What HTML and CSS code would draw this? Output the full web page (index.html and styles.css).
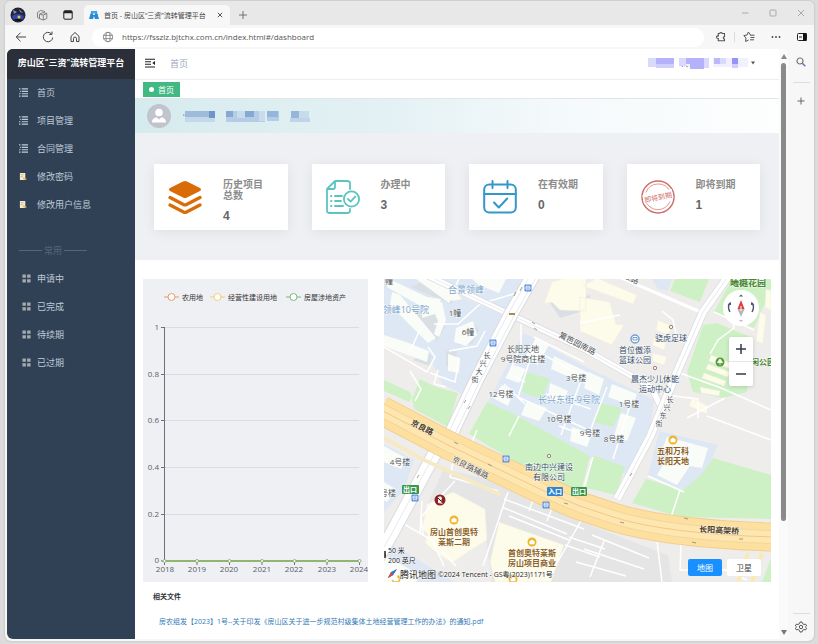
FILE: index.html
```
<!DOCTYPE html>
<html lang="zh-CN">
<head>
<meta charset="utf-8">
<meta name="viewport" content="width=device-width, initial-scale=1">
<title>首页 - 房山区“三资”流转管理平台</title>
<link rel="stylesheet" href="styles.css">
</head>
<body>
<svg class="defs" aria-hidden="true">
  <symbol id="i-list" viewBox="0 0 10 10"><path d="M0 1h1.6M3 1h7M1 3.7h1M3 3.7h7M0 6.4h1.6M3 6.4h7M0 9h1.6M3 9h7" stroke="currentColor" stroke-width="1.3" fill="none"/></symbol>
  <symbol id="i-note" viewBox="0 0 10 10"><path d="M1 1h6v8H1z" fill="#f3ead2"/><path d="M2 3h3M2 5h2" stroke="#c9a65c" stroke-width=".8"/><path d="M4 6l4 1 .5 1.5L5 8z" fill="#e0b050"/></symbol>
  <symbol id="i-grid" viewBox="0 0 10 10"><path d="M.5.5h3.8v3.8H.5zM5.7.5h3.8v3.8H5.7zM.5 5.7h3.8v3.8H.5zM5.7 5.7h3.8v3.8H5.7z" fill="#a5aaae"/></symbol>
</svg>

<div class="window">
  <div class="titlebar">
    <svg class="profile" viewBox="0 0 16 16"><circle cx="8" cy="8" r="7.5" fill="#22243a"/><path d="M2 9q6-4 12 0l-1 3q-5 3-10 0z" fill="#3346a8"/><path d="M3 3l4 2-3 2zM9 2l4 4-3-1z" fill="#8b93a5"/><circle cx="9" cy="10" r="1.5" fill="#d8c85a"/><path d="M4 12h8l-2 2H6z" fill="#10121c"/></svg>
    <svg class="ico-12 workspaces" viewBox="0 0 12 12" fill="none" stroke="#777" stroke-width=".9"><path d="M1.5 3.5l3-2 4 .8v1M1.5 3.5v5l2 1.2M3.5 5.2l3.5-1.7 3.8 1v5L7.4 11l-3.9-1.3zM3.5 5.2L7.3 6l3.5-1.5M7.3 6v5"/></svg>
    <svg class="ico-10 tabs-menu" viewBox="0 0 10 10"><rect x=".8" y=".8" width="8.4" height="8.4" rx="1.2" fill="none" stroke="#222" stroke-width="1"/><path d="M.8 3.3V2A1.2 1.2 0 0 1 2 .8h6A1.2 1.2 0 0 1 9.2 2v1.3z" fill="#222"/></svg>
    <div class="tab">
      <svg class="ico-10" viewBox="0 0 10 10"><path d="M2 1h6l.6 5H1.400z" fill="#3f9fe0"/><path d="M0 9l1.500-5h7L10 9H6L5 6 4 9z" fill="#238bd6"/><path d="M5 2l1 3H4z" fill="#eaf6fd"/></svg>
      <span class="tab-title">首页 - 房山区“三资”流转管理平台</span>
      <button class="bare" aria-label="关闭标签页"><svg class="ico-6" viewBox="0 0 6 6"><path d="M.8.8l4.4 4.4M5.2.8L.8 5.2" stroke="#444" stroke-width=".9"/></svg></button>
    </div>
    <button class="bare new-tab" aria-label="新建标签页"><svg class="ico-8" viewBox="0 0 8 8"><path d="M4 0v8M0 4h8" stroke="#666" stroke-width=".9"/></svg></button>
    <div class="window-buttons">
      <button class="bare" aria-label="最小化"><svg class="ico-8" viewBox="0 0 8 8"><path d="M1 4h6.500" stroke="#aaa"/></svg></button>
      <button class="bare" aria-label="最大化"><svg class="ico-8" viewBox="0 0 8 8"><rect x="1" y="1" width="6" height="6" rx="1" fill="none" stroke="#aaa"/></svg></button>
      <button class="bare" aria-label="关闭"><svg class="ico-8" viewBox="0 0 8 8"><path d="M1 1l6 6M7 1L1 7" stroke="#aaa"/></svg></button>
    </div>
  </div>

  <div class="toolbar">
    <div class="nav-buttons">
      <button class="bare" aria-label="后退"><svg class="ico-12" viewBox="0 0 12 12" fill="none" stroke="#444" stroke-width="1"><path d="M11 6H1.500M5.500 1.700L1.200 6l4.300 4.300"/></svg></button>
      <button class="bare" aria-label="刷新"><svg class="ico-12" viewBox="0 0 12 12" fill="none" stroke="#444" stroke-width="1"><path d="M10.700 6.500A4.700 4.700 0 1 1 9.300 2.700M10 .6v2.800H7.200"/></svg></button>
      <button class="bare" aria-label="主页"><svg class="ico-12" viewBox="0 0 12 12" fill="none" stroke="#444" stroke-width="1"><path d="M2 5.300L6 1.500l4 3.800v5.200H7.500V7.600a1.500 1.500 0 0 0-3 0v2.900H2z"/></svg></button>
    </div>
    <label class="address">
      <svg class="ico-12" viewBox="0 0 12 12" fill="none" stroke="#777" stroke-width=".8"><circle cx="6" cy="6" r="4.700"/><ellipse cx="6" cy="6" rx="2.100" ry="4.700"/><path d="M1.600 4.400h8.800M1.600 7.600h8.800"/></svg>
      <input type="text" aria-label="地址" value="https://fsszlz.bjtchx.com.cn/index.html#/dashboard">
    </label>
    <div class="tool-buttons">
      <button class="bare" aria-label="扩展"><svg class="ico-10" viewBox="0 0 10 10" fill="none" stroke="#555" stroke-width="1.100"><path d="M8.500 3.300V1.500H6.200a1.300 1.300 0 0 0-2.500 0H2.300V4a1.200 1.200 0 0 0-1 2.200l1 .3v2.200h6.200V7a1.200 1.200 0 1 1 0-2.400z"/></svg></button>
      <span class="tool-divider"></span>
      <button class="bare" aria-label="收藏夹"><svg class="ico-12" viewBox="0 0 12 12" fill="none" stroke="#555" stroke-width="1"><path d="M7.500 4L5.400 1 4 4 .8 4.600 3 7l-.4 3.500 3-1.500M7 4.200h4.500M7.500 6.500h4M7 8.800h4"/></svg></button>
      <button class="bare" aria-label="更多"><svg class="ico-10" viewBox="0 0 10 10" fill="#444"><circle cx="1.500" cy="5" r=".9"/><circle cx="5" cy="5" r=".9"/><circle cx="8.500" cy="5" r=".9"/></svg></button>
      <button class="bare" aria-label="侧边栏"><svg class="ico-10" viewBox="0 0 10 10"><rect x=".5" y="1.500" width="9" height="7" rx="1" fill="none" stroke="#222"/><path d="M6 1h3.500v8H6z" fill="#111"/><path d="M2 5h3" stroke="#222"/></svg></button>
    </div>
  </div>

  <div class="viewport">
    <div class="page">
      <nav class="sidebar">
        <h1 class="brand">房山区“三资”流转管理平台</h1>
        <ul class="menu">
          <li><a href="#"><svg class="ico-9"><use href="#i-list"/></svg>首页</a></li>
          <li><a href="#"><svg class="ico-9"><use href="#i-list"/></svg>项目管理</a></li>
          <li><a href="#"><svg class="ico-9"><use href="#i-list"/></svg>合同管理</a></li>
          <li><a href="#"><svg class="ico-9"><use href="#i-note"/></svg>修改密码</a></li>
          <li><a href="#"><svg class="ico-9"><use href="#i-note"/></svg>修改用户信息</a></li>
        </ul>
        <div class="menu-divider"><span>常用</span></div>
        <ul class="menu quick">
          <li><a href="#"><svg class="ico-9"><use href="#i-grid"/></svg>申请中</a></li>
          <li><a href="#"><svg class="ico-9"><use href="#i-grid"/></svg>已完成</a></li>
          <li><a href="#"><svg class="ico-9"><use href="#i-grid"/></svg>待续期</a></li>
          <li><a href="#"><svg class="ico-9"><use href="#i-grid"/></svg>已过期</a></li>
        </ul>
      </nav>

      <main class="main">
        <header class="navbar">
          <button class="bare" aria-label="折叠菜单"><svg class="ico-10" viewBox="0 0 10 10"><path d="M0 1.200h10M0 3.800h6M0 6.300h6M0 9h10" stroke="#222" stroke-width="1.100"/><path d="M10 3v4L7.300 5z" fill="#222"/></svg></button>
          <span class="crumb">首页</span>
          <button class="bare account" aria-label="账户菜单">
            <svg class="account-name" viewBox="0 0 100 12"><path d="M0 1h100v9H0z" fill="#f0f0ff"/><path d="M0 1h8v9H0zM31 1h7v8h-7zM56 1h5v10h-5zM66 1h12v6H66z" fill="#d9d9fd"/><path d="M8 1h18v6H8zM38 1h18v6H38zM42 7h14v5H42z" fill="#b4b2fa"/><path d="M8 7h18v4H8z" fill="#cfcefc"/><path d="M66 1h6v6h-6z" fill="#bdb8fb"/><path d="M84 1h6v6h-6z" fill="#9593f4"/><path d="M84 7h6v4h-6z" fill="#cfcefc"/><path d="M26 1h5v10h-5zM61 1h4v10h-4z" fill="#fff"/><path d="M34 10l1-1M38 9l2 1" stroke="#888" stroke-width=".8"/></svg>
            <svg class="caret" viewBox="0 0 6 4"><path d="M1 .5h4L3 3.500z" fill="#555"/></svg>
          </button>
        </header>

        <div class="tags"><a class="tag" href="#">首页</a></div>

        <section class="welcome">
          <svg class="avatar" viewBox="0 0 24 24"><circle cx="12" cy="12" r="12" fill="#c0c4cc"/><circle cx="12" cy="8.500" r="3.800" fill="#fff"/><path d="M5 18.500c0-3.500 2-4.500 4.500-5.300L12 15.500l2.500-2.300c2.500.8 4.500 1.800 4.500 5.300z" fill="#fff"/></svg>
          <svg class="welcome-name" viewBox="0 0 128 12"><path d="M2 2h30v10H2z" fill="#c3d8ea"/><path d="M2 1h24v6H2z" fill="#9fbbdc"/><path d="M26 1h6v7h-6z" fill="#7095c8"/><path d="M43 1h39v11H43z" fill="#b5cce5"/><path d="M43 1h7v6h-7zM62 1h9v6h-9z" fill="#88a8d4"/><path d="M54 1h8v7h-8zM76 1h6v10h-6z" fill="#c7dcec"/><path d="M84 1h12v10H84z" fill="#b4cce5"/><path d="M84 1h11v6H84zM108 1h8v7h-8z" fill="#96b5da"/><path d="M107 8h20v4h-20z" fill="#bed5e9"/><path d="M116 1h10v7h-10z" fill="#c5dcea"/><circle cx=".8" cy="5" r=".6" fill="#445"/></svg>
        </section>

        <section class="stats">
          <article class="card">
            <svg class="card-icon" viewBox="0 0 34 34"><path d="M15 1.500q2-1 4 0l13 6.500q2 1.500 0 3l-13 6.500q-2 1-4 0L2 11q-2-1.500 0-3z" fill="#d96c06"/><path d="M2 17.500l13.500 7q1.500.7 3 0l13.500-7M2 25l13.500 7q1.500.7 3 0L32 25" fill="none" stroke="#d96c06" stroke-width="3.200" stroke-linecap="round"/></svg>
            <div class="card-text"><h2>历史项目总数</h2><p>4</p></div>
          </article>
          <article class="card">
            <svg class="card-icon" viewBox="0 0 34 34" fill="none" stroke="#5cc4bf" stroke-width="1.800" stroke-linecap="round" stroke-linejoin="round"><path d="M24 9V3.500Q24 1 21.500 1H9L1 9v21.500Q1 33 3.500 33h18q2.500 0 2.500-2.500V29M9 1v6q0 2-2 2H1M9 16h7M9 21h6M9 26h8M5 16h.5M5 21h.5M5 26h.5"/><circle cx="25.500" cy="19" r="7.600"/><path d="M22 19l2.600 2.600 4.600-5"/></svg>
            <div class="card-text"><h2>办理中</h2><p>3</p></div>
          </article>
          <article class="card">
            <svg class="card-icon" viewBox="0 0 34 34" fill="none" stroke="#3298ca" stroke-width="2" stroke-linecap="round" stroke-linejoin="round"><rect x="1.200" y="4.500" width="31.600" height="28" rx="5"/><path d="M1.200 14h31.600M9.500 1v7M24.500 1v7M11 22.500l4.800 5 8.400-9"/></svg>
            <div class="card-text"><h2>在有效期</h2><p>0</p></div>
          </article>
          <article class="card">
            <svg class="card-icon" viewBox="0 0 34 34"><g fill="none" stroke="#cf6d68"><circle cx="17" cy="17" r="16" stroke-width="1.500"/><path d="M5 12.500a13 13 0 0 1 24-1M29 21.500a13 13 0 0 1-24.500-1" stroke-width=".7"/></g><g transform="rotate(-12 17 17)"><path d="M2 12h30v9H2z" fill="#fff"/><text x="17" y="20" text-anchor="middle" class="stamp">即将到期</text></g></svg>
            <div class="card-text"><h2>即将到期</h2><p>1</p></div>
          </article>
        </section>

        <section class="panels">
          <svg class="chart" viewBox="0 0 225 303" role="img" aria-label="用地趋势">
            <g class="legend">
              <path d="M21 18h15" stroke="#ee9a68"/><circle cx="28.500" cy="18" r="3.500" fill="#fff" stroke="#ee9a68"/><text x="39" y="21">农用地</text>
              <path d="M67 18h15" stroke="#f2cf75"/><circle cx="74.500" cy="18" r="3.500" fill="#fff" stroke="#f2cf75"/><text x="85" y="21">经营性建设用地</text>
              <path d="M143 18h15" stroke="#7db87c"/><circle cx="150.500" cy="18" r="3.500" fill="#fff" stroke="#7db87c"/><text x="161" y="21">房屋涉地资产</text>
            </g>
            <path d="M22 48.500h194M22 95.500h194M22 141.500h194M22 188.500h194M22 235.500h194" stroke="#dadce1"/>
            <path d="M21.500 48v234M18 48.500h4M18 95.500h4M18 141.500h4M18 188.500h4M18 235.500h4M18 282h4M21.500 282v4M54 282v4M86.500 282v4M119 282v4M151.500 282v4M184 282v4M216.500 282v4" stroke="#6e7079" fill="none"/>
            <g class="axis y-axis"><text x="16" y="51">1</text><text x="16" y="98">0.8</text><text x="16" y="144">0.6</text><text x="16" y="191">0.4</text><text x="16" y="238">0.2</text><text x="16" y="284">0</text></g>
            <path d="M22 282h194" stroke="#91b572" stroke-width="2"/>
            <g fill="#fff" stroke="#78a862" stroke-width=".8"><circle cx="21.500" cy="282" r="1.500"/><circle cx="54" cy="282" r="1.500"/><circle cx="86.500" cy="282" r="1.500"/><circle cx="119" cy="282" r="1.500"/><circle cx="151.500" cy="282" r="1.500"/><circle cx="184" cy="282" r="1.500"/><circle cx="216.500" cy="282" r="1.500"/></g>
            <g class="axis x-axis"><text x="22" y="293">2018</text><text x="54" y="293">2019</text><text x="86" y="293">2020</text><text x="119" y="293">2021</text><text x="151" y="293">2022</text><text x="184" y="293">2023</text><text x="216" y="293">2024</text></g>
          </svg>

          <div class="map">
            <svg class="map-canvas" viewBox="0 0 387 303" role="img" aria-label="地图">
              <defs>
                <g id="bus"><rect x="-3.500" y="-3.500" width="7" height="7" rx="1" fill="#5b8fdc"/><path d="M-2-1.800h4v3h-4zM-2-.2h4M-1.500 2h.8M.7 2h.8" fill="none" stroke="#fff" stroke-width=".8"/></g>
                <g id="shop"><circle r="4.500" fill="#efb52c"/><path d="M-2.200-1h4.400v3h-4.400zM-1-1a1 1 0 0 1 2 0" fill="#fff" stroke="#fff" stroke-width=".6"/></g>
              </defs>
              <path d="M0 0h387v303H0z" fill="#efedeb"/>
              <g fill="#dde8f4">
                <path d="M0 0h38l84 38-44 77-20-10-9-20-49-24z"/><path d="M48 0h103l-24 33z"/>
                <path d="M140 54l62 34 68 33-4 30-22 46-42-20-98-54z"/>
                <path d="M275 152l59 14-13 30-22 15-35-14z"/>
                <path d="M0 165l30 16-10 30-20 22z"/><path d="M0 262l20 10 50 31H0z"/><path d="M268 0h20l-4 12-10-2z"/>
              </g>
              <g fill="#cdf1c5">
                <path d="M0 101l26 12 2 5-3 5L0 112z"/><path d="M36 100l16 8 22 6-10 34-34-18-2-10z"/>
                <path d="M103 123l27 12 76 42-9 36-37-13-75-45z"/><path d="M209 176l32 12-9 28-30-7z"/>
                <path d="M143 93l23 7-9 20-19-7z"/><path d="M216 124l22 5-9 19-20-5z"/>
                <path d="M291 0h34l-9 23-30-11z"/><path d="M348 0h39v10l-17 39-40-16z"/>
                <path d="M319 46l14-2 36 15-6 54-24 6-30-6-6-20z"/>
                <path d="M329 179l58 17v44l-91-2-48-14 14-24 37 11 19-16z"/><path d="M378 303l9-24v24z"/>
              </g>
              <path d="M60 190l60 14 80 40 84 32 4 27H108l-7-50-34-39-24 12z" fill="#e5e5e6"/>
              <g fill="#d9dfe3"><path d="M45 0h8l22 16-8 9-40-17zM54 28l7 20-8 14-24-32zM91 46l4 5-7 14-15 1zM62 72h11l-2 15H62zM40 72l8 5-3 10-16-6zM166 24l40-8v14l-30 9z"/></g>
              <g fill="#fafcf8">
                <path d="M5 0l38 18 14 2-4 12-20-7L3 8z"/><path d="M32 0h18l21 14-6 10zM58 5l8 0 12 15-10 2zM8 13l8 3 36 43-8 5L6 26z"/><path d="M38 27l20-4 4 18-7 17-5-3 4-13-3-7-13 4z"/>
                <path d="M72 49l17-7 4 14-11 11-12-4zM64 75l12 4-1 15-11-2z"/><path d="M0 56l22 7 23 9-2 11-19-7-24-9z"/>
                <path d="M88 0h34l-7 14-20-8z"/>
                <path d="M130 86l12 4-7 14-14-5zM152 59l13 7-11 20-14-6zM170 77l35 17-4 11-34-15zM118 106l12 5-6 16-15-8zM143 122l20 7-8 13-18-6zM166 104l18 8-5 12-15-5zM205 93l15 7-5 16-15-7zM228 105l25 10-4 12-25-9zM237 134l15 5-9 23-13-5zM188 148l20 7-5 13-17-6z"/>
                <path d="M283 158l41 11-6 20-12-2-13 19-20-10 13-23-7-5z"/><path d="M0 167l22 12-5 11-17-7zM0 203l13 8-10 12-3-2z"/><path d="M0 276l36 20-4 7H0z"/>
              </g>
              <g fill="#fdfbea" stroke="#f0eddf" stroke-width=".6">
                <path d="M213-1l40 17-4 9-50-18zM196 18l30 5 6 22 8 1-12 20-32-14zM160 25l8-22 19-6 15 0v35l-26-1-8-8z"/>
                <path d="M274 41l14 6-4 9-12-5zM271 57l12 4-3 10-12-5zM269 74l14 4-3 8-12-4zM327 76l22 9-2 5-22-8zM324 85l22 8-2 5-22-8zM320 94l22 8-2 5-22-8zM316 108l20 4-1 5-18-3zM308 119l16 8-1 8-18-8zM376 33l6 3-3 29-7-3zM382 10l5 2v20l-6-4z"/>
                <path d="M43 225l13-6 13-6 15 8 17 9 2 31-16 10-19 13-13-8-14-12 3-9-6-5z"/>
                <path d="M115 243l65 23-13 37h-56l-5-20z"/>
              </g>
              <g fill="none" stroke="#fff" stroke-width="1.500">
                <path d="M0 68l43 25 8-15-7-10M26 73l10-23M75 80l-4 23-25-9M50 45l24 0 22-20 40-12M75 0l-4 8 16 10M65 72l28-5 8-15M54 91l-4 14 12 3M26 92l11 18-6 12"/>
                <path d="M137 45v20l-12 30 16 8M150 58l50 25M120 105l21 20M150 68l-16 50 68 32M158 75l40 22M199 96l-22 60M223 108l-22 57M248 120l-19 60M162 115l45 15M175 147l25 9M135 137l-10 20M209 178l-9 30"/>
                <path d="M278 32l11 9 4 18M345 24l5 25-16 12-8 14M196 44l40-8M270 151l-16 31M264 197l36 16M296 211l-9 27M282 116l32 4 0 19M303 139l38-20M323 137l64 24M330 33l40 18M293 93l44 16 50 22"/>
                <path d="M93 151l-12 29M70 178l-4 20 48 14M71 202l-34 36 2 18M38 222l-2 32M124 213l-25 74M120 220l80 30M118 228l65 27M125 237l60 24M150 218l-5 14M170 224l-7 18M198 240l-30 53M208 256l57 23M200 270l60 20M192 283l50 14M220 262l-14 36M185 258l36 12M181 266l35 12M273 262l5 41M297 265l-1 26 45 0 22 10M20 245l28 16 24 26M48 261l12 26"/>
              </g>
              <g fill="none" stroke-linejoin="round">
                <path d="M42-4l83 39 77 36 65 37 12 24" stroke="#d8dbe0" stroke-width="7"/><path d="M42-4l83 39 77 36 65 37 12 24" stroke="#fff" stroke-width="5.500"/><path d="M42-4l83 39 77 36 60 34" stroke="#dfe2e8" stroke-width=".7"/>
                <path d="M228-5l91 39" stroke="#fff" stroke-width="3"/>
                <path d="M346-5l-27 38-26 60-27 65-33 62" stroke="#d8dbe0" stroke-width="9"/><path d="M346-5l-27 38-26 60-27 65-33 62" stroke="#fff" stroke-width="7.500"/><path d="M346-5l-27 38-26 60-27 65-33 62" stroke="#dfe2e8" stroke-width=".8"/>
                <path d="M150-5l-23 40-34 65-27 57M52 172L8 254l-22 38" stroke="#d8dbe0" stroke-width="15"/><path d="M150-5l-23 40-34 65-27 57M52 172L8 254l-22 38" stroke="#fff" stroke-width="13"/><path d="M147-5l-23 40-34 65-27 57M153-3l-23 40-34 65-27 57M52 172L8 254l-22 38" stroke="#e3e5e9" stroke-width=".9"/>
                <path d="M0 159l40 22 55 25 22 10" stroke="#f6e9c6" stroke-width="4"/>
                <path d="M-3 131l65 34 48 23 50 24 36 15 33 11q55 17 160 20" stroke="#f2cf90" stroke-width="29"/><path d="M-3 131l65 34 48 23 50 24 36 15 33 11q55 17 160 20" stroke="#fde0a0" stroke-width="27"/>
                <path d="M-3 131l65 34 48 23 50 24 36 15 33 11q55 17 160 20" stroke="#f5d59a" stroke-width="14"/><path d="M-3 131l65 34 48 23 50 24 36 15 33 11q55 17 160 20" stroke="#fee6b0" stroke-width="12"/><path d="M-3 131l65 34 48 23 50 24 36 15 33 11q55 17 160 20" stroke="#f3c885" stroke-width="1"/>
                <path d="M364 274l-10 29M378 274l-10 29" stroke="#f9e9b5" stroke-width="4"/>
              </g>
              <g stroke="#8b8378" stroke-width=".8"><path d="M70 163l4 2M104 185l4 2M180 224l4 1M236 243l4 1M300 239l4 1M308 263l4 1M355 260l4 0M130 17l2-4M136 12l2-4M148 43l3 2M150 49l3 2M80 124l2-3M84 130l2-3M246 197l2-3M33 199l2-3"/></g>
              <path d="M125 35h6" stroke="#b08b50" stroke-width="2"/>

              <g class="estate"><text x="82" y="14">合景领峰</text><text class="end" x="45" y="34">领峰10号院</text><text x="185" y="124">长兴东街-9号院</text></g>
              <g class="place">
                <text x="5" y="5">幢</text><text x="71" y="37">1幢</text><text x="84" y="56">6幢</text><text x="139" y="73">长阳天地</text><text x="139" y="83">9号院商住楼</text><text x="117" y="118">12号楼</text><text x="192" y="102">3号楼</text><text x="175" y="143">10号楼</text><text x="245" y="128">1号楼</text><text x="206" y="157">9号楼</text><text x="230" y="163">8号楼</text><text x="16" y="186">4号楼</text><text x="4" y="217">号楼</text>
                <text transform="translate(192 67) rotate(27)" x="0" y="0">篱笆园南路</text><text transform="translate(246 2) rotate(24)" x="0" y="0">政路</text><text transform="translate(85 191) rotate(27)" x="0" y="0">京良路辅路</text>
              </g>
              <g class="street">
                <text x="103" y="79">长</text><text x="99" y="87">兴</text><text x="95" y="95">大</text><text x="91" y="103">街</text>
                <text x="286" y="123">长</text><text x="283" y="131">兴</text><text x="279" y="139">东</text><text x="275" y="147">街</text>
              </g>
              <g class="poi"><text x="287" y="62">骁虎足球</text><text x="251" y="74">首位傲添</text><text x="251" y="84">篮球公园</text><text x="271" y="103">晨杰少儿体能</text><text x="271" y="113">运动中心</text><text x="165" y="191">南边中兴建设</text><text x="165" y="201">有限公司</text></g>
              <g class="mall"><text x="289" y="175">五和万科</text><text x="289" y="185">长阳天地</text><text x="70" y="256">房山首创奥特</text><text x="70" y="266">莱斯二期</text><text x="148" y="277">首创奥特莱斯</text><text x="148" y="287">房山项目商业</text></g>
              <g class="highway"><text transform="translate(37 151) rotate(27)" x="0" y="0">京良路</text><text transform="translate(335 254) rotate(3)" x="0" y="0">长阳高架桥</text></g>
              <g class="park"><text class="garden" x="364" y="7">曦樾花园</text><text x="379" y="86">闲公园</text></g>
              <g fill="#f7f3ee" stroke="#9a8675"><circle cx="287" cy="48" r="1.700"/><circle cx="271" cy="89" r="1.700"/><circle cx="165" cy="177" r="1.700"/></g>
              <use href="#bus" x="144" y="9"/><use href="#bus" x="109" y="64"/><use href="#bus" x="122" y="180"/><use href="#bus" x="162" y="226"/><use href="#bus" x="31" y="219"/>
              <use href="#shop" x="289" y="161"/><use href="#shop" x="70" y="241"/><use href="#shop" x="148" y="263"/><use href="#shop" x="129" y="300"/><use href="#shop" x="12" y="300"/>
              <circle cx="251" cy="60" r="4" fill="#fff" stroke="#6f9fd0" stroke-width="1.500"/><path d="M249 58.500h4v2.500h-4z" fill="none" stroke="#6f9fd0"/>
              <circle cx="336" cy="83" r="4.500" fill="#5a9d3c"/><path d="M336 80l2.500 3.500h-5zM336 83v3" fill="#fff" stroke="#fff" stroke-width=".8"/>
              <circle cx="56" cy="221" r="5.500" fill="#8b2224"/><path d="M54 218q3-2 4 1l-1 4 2 2-5-1z" fill="#f4ece8"/><path d="M54 219l3 3" stroke="#222"/>
              <g class="exit"><rect x="18" y="206" width="17" height="9" rx="1" fill="#38974f"/><text x="26" y="213">出口</text><rect x="163" y="208" width="16" height="9" rx="1" fill="#3285d2"/><text x="171" y="215">入口</text><rect x="187" y="208" width="16" height="9" rx="1" fill="#38974f"/><text x="195" y="215">出口</text></g>
              <path d="M1 272v7M1 276h1" stroke="#222" stroke-width="1.500"/>
              <g class="credit"><text x="4" y="274">50 米</text><text x="4" y="284">200 英尺</text><circle cx="8" cy="295" r="6" fill="#fff"/><path d="M4 299l3-5 6-4-4 6z" fill="#df4a3d"/><path d="M4 299l5-3 4-6-6 3z" fill="#267bd1"/><path d="M4 299l3-6 2 3z" fill="#df4a3d"/><text class="logo-text" x="16" y="299">腾讯地图</text><text x="54" y="298">©2024 Tencent - GS粤(2023)1171号</text></g>
            </svg>
            <button class="compass" aria-label="指北针"><svg viewBox="0 0 36 36"><path d="M18 10l3.500 9h-7z" fill="#df3c43"/><path d="M14.500 19h7L18 27z" fill="#b6b6b6"/><path d="M18 16v5" stroke="#fff"/><path d="M7 13q-3 4 0 9M29 13q3 4 0 9" fill="none" stroke="#4c536a" stroke-width="1.400"/><path d="M4.500 14.500L8 12v3zM31.500 14.500L28 12v3zM16 6.500l2-2 2 2z" fill="#4c536a"/><path d="M16 30l2 2 2-2z" fill="#bbb"/></svg></button>
            <div class="zoom"><button aria-label="放大"><svg class="ico-10" viewBox="0 0 10 10"><path d="M5 0v10M0 5h10" stroke="#333a4c" stroke-width="1.500"/></svg></button><button aria-label="缩小"><svg class="ico-10" viewBox="0 0 10 10"><path d="M0 5h10" stroke="#333a4c" stroke-width="1.500"/></svg></button></div>
            <div class="layers"><button class="active">地图</button><button>卫星</button></div>
          </div>
        </section>

        <section class="files">
          <h2>相关文件</h2>
          <a href="#">房农组发【2023】1号--关于印发《房山区关于进一步规范村级集体土地经营管理工作的办法》的通知.pdf</a>
        </section>
      </main>

      <div class="scrollbar" aria-hidden="true">
        <svg class="arrow" viewBox="0 0 6 5"><path d="M0 5L3 0l3 5z" fill="#888"/></svg>
        <div class="track"><div class="thumb"></div><div class="rest"></div></div>
        <svg class="arrow" viewBox="0 0 6 5"><path d="M0 0l3 5 3-5z" fill="#777"/></svg>
      </div>
    </div>

    <aside class="edge-bar">
      <button class="bare" aria-label="搜索"><svg class="ico-10" viewBox="0 0 10 10" fill="none"><circle cx="4" cy="4" r="3" stroke="#777" stroke-width="1.200"/><path d="M6.300 6.300L9.300 9.300" stroke="#8b66b5" stroke-width="1.600"/></svg></button>
      <hr>
      <button class="bare" aria-label="添加"><svg class="ico-8" viewBox="0 0 8 8"><path d="M4 .5v7M.5 4h7" stroke="#666"/></svg></button>
      <span class="spacer"></span>
      <hr>
      <button class="bare settings" aria-label="设置"><svg class="ico-12" viewBox="0 0 12 12" fill="none" stroke="#555" stroke-width="1"><path d="M5 1h2l.5 1.600 1.500.9 1.600-.4 1 1.800L10.400 6l1.200 1.200-1 1.700L9 8.500l-1.500.9L7 11H5l-.5-1.600L3 8.500l-1.600.4-1-1.700L1.600 6 .4 4.900l1-1.800L3 3.500l1.500-.9z"/><circle cx="6" cy="6" r="1.700"/></svg></button>
    </aside>
  </div>
</div>
</body>
</html>
```
FILE: styles.css
```
* { box-sizing: border-box; }

body {
  margin: 0;
  min-height: 100vh;
  display: flex;
  padding: 1px 4px 4px 5px;
  background: #dcdcdc;
  font-family: "Open Sans", "Noto Sans CJK SC", sans-serif;
  font-size: 9px;
  color: #333;
}

h1, h2, p, ul { margin: 0; padding: 0; }
ul { list-style: none; }
a { color: inherit; text-decoration: none; }
svg { display: block; flex: none; }
button { font-family: inherit; cursor: pointer; }

.defs { position: absolute; width: 0; height: 0; }
.bare { display: flex; align-items: center; padding: 0; border: 0; background: none; }
.ico-6 { width: 6px; height: 6px; }
.ico-8 { width: 8px; height: 8px; }
.ico-9 { width: 9px; height: 9px; }
.ico-10 { width: 10px; height: 10px; }
.ico-12 { width: 12px; height: 12px; }

/* Browser window */
.window {
  flex: 1;
  min-width: 0;
  display: flex;
  flex-direction: column;
  border-radius: 6px;
  overflow: hidden;
  background: #f7f7f7;
  box-shadow: 0 0 2px #aaa;
}

.titlebar {
  display: flex;
  align-items: center;
  height: 24px;
  padding: 4px 9px 0 5px;
  background: #e8e8e8;
}
.profile { width: 16px; height: 16px; }
.workspaces { margin-left: 10px; }
.tabs-menu { margin-left: 15px; }
.tab {
  display: flex;
  align-items: center;
  align-self: stretch;
  gap: 5px;
  width: 146px;
  margin-left: 11px;
  padding: 0 7px 0 5px;
  border-radius: 5px 5px 0 0;
  background: #f7f7f7;
}
.tab-title { flex: 1; font-size: 7px; white-space: nowrap; color: #444; }
.new-tab { margin-left: 9px; }
.window-buttons { display: flex; gap: 20px; margin-left: auto; padding-bottom: 4px; }

.toolbar { display: flex; align-items: center; height: 24px; padding: 0 7px 0 10px; }
.nav-buttons { display: flex; gap: 15px; }
.address {
  flex: 1;
  display: flex;
  align-items: center;
  gap: 8px;
  height: 19px;
  margin: 0 12px 0 11px;
  padding: 0 10px;
  border-radius: 10px;
  background: #fff;
}
.address input {
  flex: 1;
  min-width: 0;
  padding: 0 0 2px;
  border: 0;
  outline: 0;
  background: none;
  font-family: inherit;
  font-size: 8px;
  color: #555;
}
.tool-buttons { display: flex; align-items: center; gap: 16px; }
.tool-divider { width: 1px; height: 10px; margin: 0 -8px; background: #ddd; }

.viewport { flex: 1; display: flex; }
.page {
  flex: 1;
  min-width: 0;
  display: flex;
  margin: 0 0 2px 2px;
  border-radius: 6px;
  overflow: hidden;
  background: #fff;
}

/* Sidebar */
.sidebar { flex: none; width: 128px; background: #304156; color: #bfcbd9; }
.brand {
  height: 30px;
  background: #2b2f3a;
  color: #fff;
  font: bold 9px/29px Roboto, "Noto Sans CJK SC", sans-serif;
  text-align: center;
  white-space: nowrap;
}
.menu a { display: flex; align-items: center; gap: 9px; height: 28px; padding: 0 0 2px 12px; }
.quick a { gap: 6px; padding-left: 15px; }
.menu-divider {
  display: flex;
  align-items: center;
  gap: 2px;
  width: 68px;
  height: 28px;
  margin: 18px 0 0 12px;
  padding-bottom: 2px;
  color: #56667a;
}
.menu-divider::before, .menu-divider::after { content: ""; flex: 1; height: 1px; background: #56667a; }

/* Main column */
.main { flex: 1; min-width: 0; }
.navbar {
  display: flex;
  align-items: center;
  gap: 15px;
  height: 31px;
  padding: 0 23px 2px 10px;
  border-bottom: 1px solid #eee;
}
.crumb { color: #97a8be; }
.account { gap: 2px; margin-left: auto; }
.account-name { width: 100px; height: 12px; }
.caret { width: 6px; height: 4px; }

.tags { height: 19px; padding: 2px 8px; border-bottom: 1px solid #e2e6e8; }
.tag {
  display: inline-flex;
  align-items: center;
  gap: 4px;
  height: 15px;
  padding: 0 6px;
  background: #42b983;
  color: #fff;
  font-size: 8px;
  vertical-align: top;
}
.tag::before { content: ""; width: 5px; height: 5px; border-radius: 50%; background: #fff; }

.welcome {
  display: flex;
  align-items: center;
  gap: 12px;
  height: 34px;
  padding-left: 12px;
  background: linear-gradient(90deg, #d6ebee, #e4f1f4 40%, #f4f9fb 65%, #fdfefe);
}
.avatar { width: 24px; height: 24px; }
.welcome-name { width: 128px; height: 12px; }

.stats {
  display: grid;
  grid-template-columns: repeat(4, 1fr);
  gap: 24px;
  padding: 31px 19px 30px;
  background: #eff0f4;
}
.card {
  display: flex;
  align-items: center;
  gap: 21px;
  height: 66px;
  padding: 0 14px;
  background: #fff;
  box-shadow: 0 2px 12px rgba(0, 0, 0, 0.07);
}
.card-icon { width: 34px; height: 34px; }
.card-text { align-self: flex-start; width: 44px; padding-top: 15px; }
.card-text h2 { font-size: 10px; line-height: 11px; color: #8c8c8c; }
.card-text p { margin-top: 9px; font: bold 12px/12px "Liberation Sans", sans-serif; color: #666; }
.stamp { font-size: 7px; fill: #cf6d68; }

.panels {
  display: grid;
  grid-template-columns: 225fr 387fr;
  gap: 16px;
  padding: 19px 8px 0;
}
.chart { width: 100%; height: auto; background: #eff0f4; }
.legend { font-size: 7px; }
.legend text { fill: #333; }
.axis { font-size: 8px; }
.axis text { fill: #5b5d66; }
.y-axis { text-anchor: end; }
.x-axis { text-anchor: middle; }

/* Map */
.map { position: relative; }
.map-canvas { width: 100%; height: auto; font-size: 8px; text-anchor: middle; }
.map-canvas text { paint-order: stroke; stroke: rgba(255, 255, 255, 0.8); stroke-width: 1px; }
.estate { font-size: 9px; fill: #7ba5cb; }
.end { text-anchor: end; }
.place, .street { fill: #4f5359; }
.street { font-size: 7px; }
.poi { fill: #344d6b; }
.mall { fill: #8c611f; font-weight: bold; }
.highway { fill: #4b3b20; font-weight: bold; }
.park { fill: #47852f; font-weight: bold; }
.garden { font-size: 9px; }
.exit { font-size: 7px; font-weight: bold; fill: #fff; }
.map-canvas .exit text { stroke: none; }
.credit { font-size: 7px; text-anchor: start; fill: #222; }
.logo-text { font-size: 9px; }

.compass {
  position: absolute;
  top: 11px;
  right: 12px;
  width: 36px;
  height: 36px;
  padding: 0;
  border: 0;
  border-radius: 50%;
  background: #fff;
}
.zoom {
  position: absolute;
  top: 58px;
  right: 18px;
  width: 24px;
  border-radius: 2px;
  background: #fff;
  box-shadow: 0 1px 4px rgba(0, 0, 0, 0.15);
}
.zoom button {
  display: flex;
  align-items: center;
  justify-content: center;
  width: 100%;
  height: 24px;
  padding: 0;
  border: 0;
  background: none;
}
.zoom button + button { height: 25px; border-top: 1px solid #e6e6e6; }
.layers { position: absolute; right: 10px; bottom: 6px; display: flex; gap: 5px; }
.layers button {
  width: 34px;
  height: 17px;
  padding: 0;
  border: 0;
  border-radius: 2px;
  background: #fff;
  color: #444;
  font-size: 8px;
}
.layers .active { background: #1890ff; color: #fff; }

.files { padding: 10px 18px 12px; font-size: 7px; }
.files h2 { font-size: 7px; line-height: 10px; color: #303133; }
.files a { display: block; margin: 15px 0 0 6px; line-height: 10px; color: #337ab7; }

/* Scrollbar and browser side bar */
.scrollbar {
  flex: none;
  display: flex;
  flex-direction: column;
  align-items: center;
  gap: 4px;
  width: 9px;
  padding: 5px 0 4px;
  background: #fafafa;
}
.arrow { width: 6px; height: 5px; }
.track { flex: 1; display: flex; flex-direction: column; }
.thumb { flex: 458; width: 5px; border-radius: 3px; background: #8b8a8a; }
.rest { flex: 105; }

.edge-bar {
  flex: none;
  display: flex;
  flex-direction: column;
  align-items: center;
  width: 26px;
  padding: 8px 0;
}
.edge-bar hr { width: 17px; margin: 15px 0 14px; border: 0; border-top: 1px solid #ddd; }
.spacer { flex: 1; }
.edge-bar hr:nth-of-type(2) { margin: 0 0 7px; }
```
